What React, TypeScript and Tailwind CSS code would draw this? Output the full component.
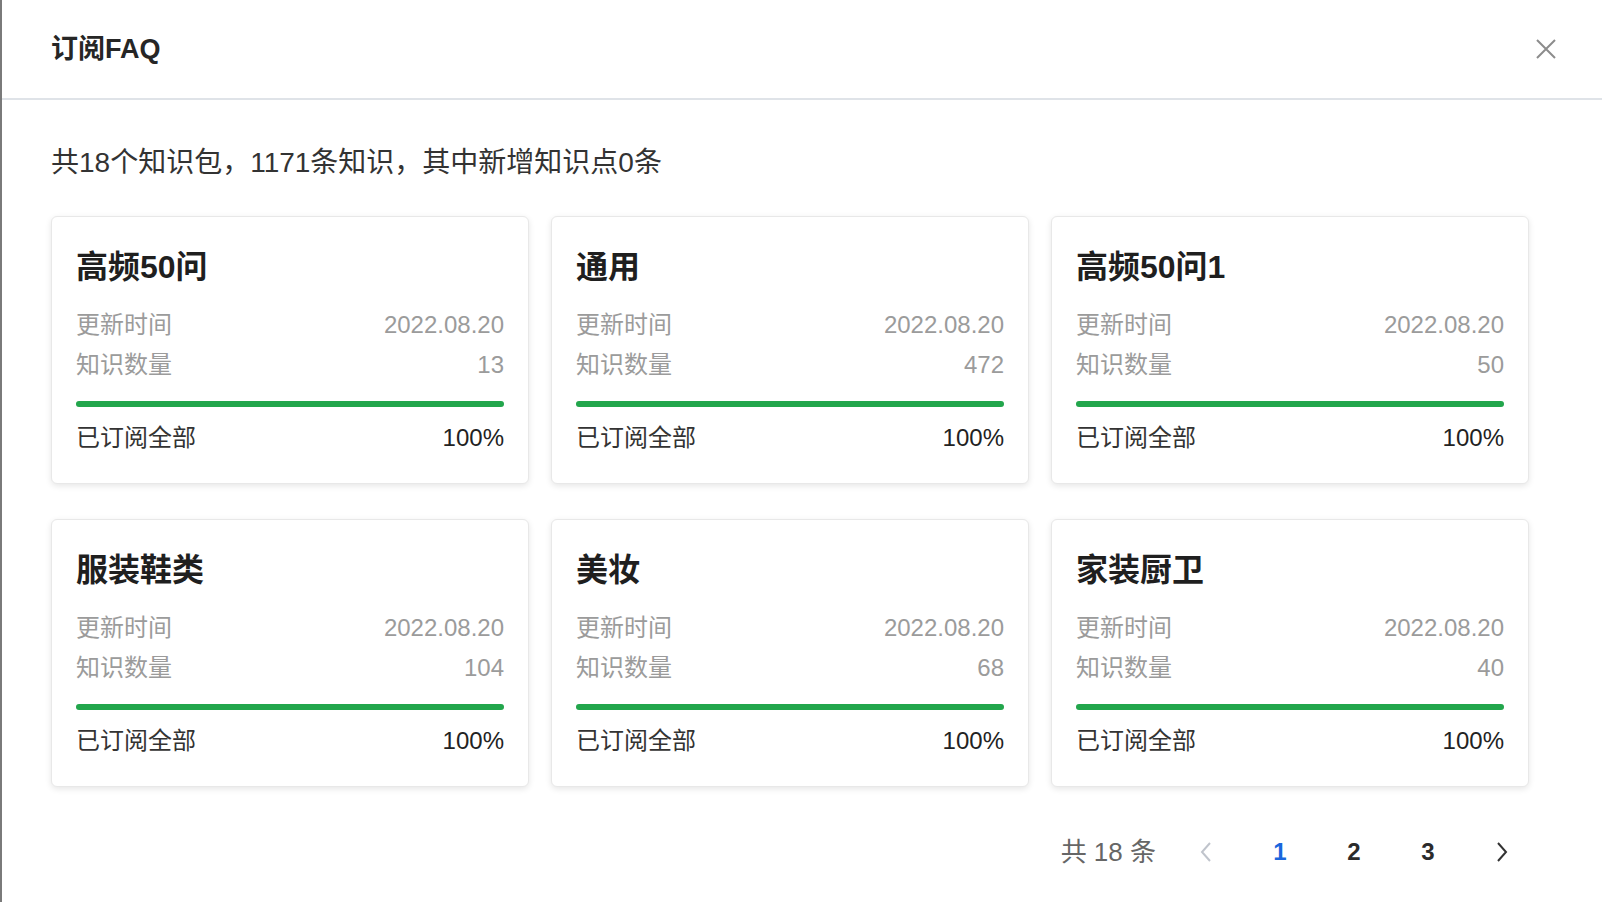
import React from "react"

interface Pack {
  name: string
  updatedAt: string
  count: number
  percent: number
}

const packs: Pack[] = [
  { name: "高频50问", updatedAt: "2022.08.20", count: 13, percent: 100 },
  { name: "通用", updatedAt: "2022.08.20", count: 472, percent: 100 },
  { name: "高频50问1", updatedAt: "2022.08.20", count: 50, percent: 100 },
  { name: "服装鞋类", updatedAt: "2022.08.20", count: 104, percent: 100 },
  { name: "美妆", updatedAt: "2022.08.20", count: 68, percent: 100 },
  { name: "家装厨卫", updatedAt: "2022.08.20", count: 40, percent: 100 },
]

function PackCard({ pack }: { pack: Pack }) {
  return (
    <div className="h-[268px] rounded-[6px] border border-[#e8e8e8] bg-white px-[24px] pt-[30px] shadow-[0_2px_6px_rgba(0,0,0,0.1)]">
      <div className="text-[32px] font-bold leading-[40px] text-[#1f1f1f]">{pack.name}</div>
      <div className="mt-[18px] flex items-center justify-between text-[24px] leading-[40px] text-[#9b9b9b]">
        <span>更新时间</span>
        <span>{pack.updatedAt}</span>
      </div>
      <div className="flex items-center justify-between text-[24px] leading-[40px] text-[#9b9b9b]">
        <span>知识数量</span>
        <span>{pack.count}</span>
      </div>
      <div className="mt-[16px] h-[6px] w-full rounded-full bg-[#eeeeee]">
        <div className="h-full rounded-full bg-[#22a64c]" style={{ width: `${pack.percent}%` }} />
      </div>
      <div className="mt-[11px] flex items-center justify-between text-[24px] leading-[40px] text-[#333333]">
        <span>已订阅全部</span>
        <span className="text-[#222222]">{pack.percent}%</span>
      </div>
    </div>
  )
}

export default function App() {
  return (
    <div className="h-[902px] w-full overflow-hidden border-l-2 border-[#7a7a7a] bg-white font-['Liberation_Sans','Noto_Sans_CJK_SC',sans-serif]">
      {/* Header */}
      <div className="flex h-[100px] items-center justify-between border-b-2 border-[#dfe3e8] pl-[49px] pr-[46px]">
        <h1 className="text-[27px] font-bold text-[#262626]">订阅FAQ</h1>
        <button className="text-[#8c8c8c]" title="关闭">
          <svg width="20" height="20" viewBox="0 0 20 20" fill="none" stroke="currentColor" strokeWidth={2}>
            <path d="M1 1l18 18M19 1L1 19" />
          </svg>
        </button>
      </div>

      <div className="pl-[49px]">
        <p className="mt-[45px] text-[28px] leading-[36px] text-[#333333]">
          共18个知识包，1171条知识，其中新增知识点0条
        </p>

        <div className="mt-[35px] grid grid-cols-[478px_478px_478px] gap-x-[22px] gap-y-[35px]">
          {packs.map((p) => (
            <PackCard key={p.name} pack={p} />
          ))}
        </div>
      </div>

      {/* Pagination */}
      <div className="mt-[45px] flex h-[40px] items-center justify-end gap-[34px] pr-[80px] text-[24px]">
        <span className="mr-[-4px] text-[26px] text-[#666666]">共 18 条</span>
        <button className="flex w-[40px] justify-center text-[#c0c4cc]">
          <svg width="12" height="20" viewBox="0 0 12 20" fill="none" stroke="currentColor" strokeWidth={2}>
            <path d="M10 1L2 10l8 9" />
          </svg>
        </button>
        <button className="w-[40px] text-center font-bold text-[#1a66dd]">1</button>
        <button className="w-[40px] text-center font-bold text-[#2b2b2b]">2</button>
        <button className="w-[40px] text-center font-bold text-[#2b2b2b]">3</button>
        <button className="flex w-[40px] justify-center text-[#333333]">
          <svg width="12" height="20" viewBox="0 0 12 20" fill="none" stroke="currentColor" strokeWidth={2}>
            <path d="M2 1l8 9-8 9" />
          </svg>
        </button>
      </div>
    </div>
  )
}
